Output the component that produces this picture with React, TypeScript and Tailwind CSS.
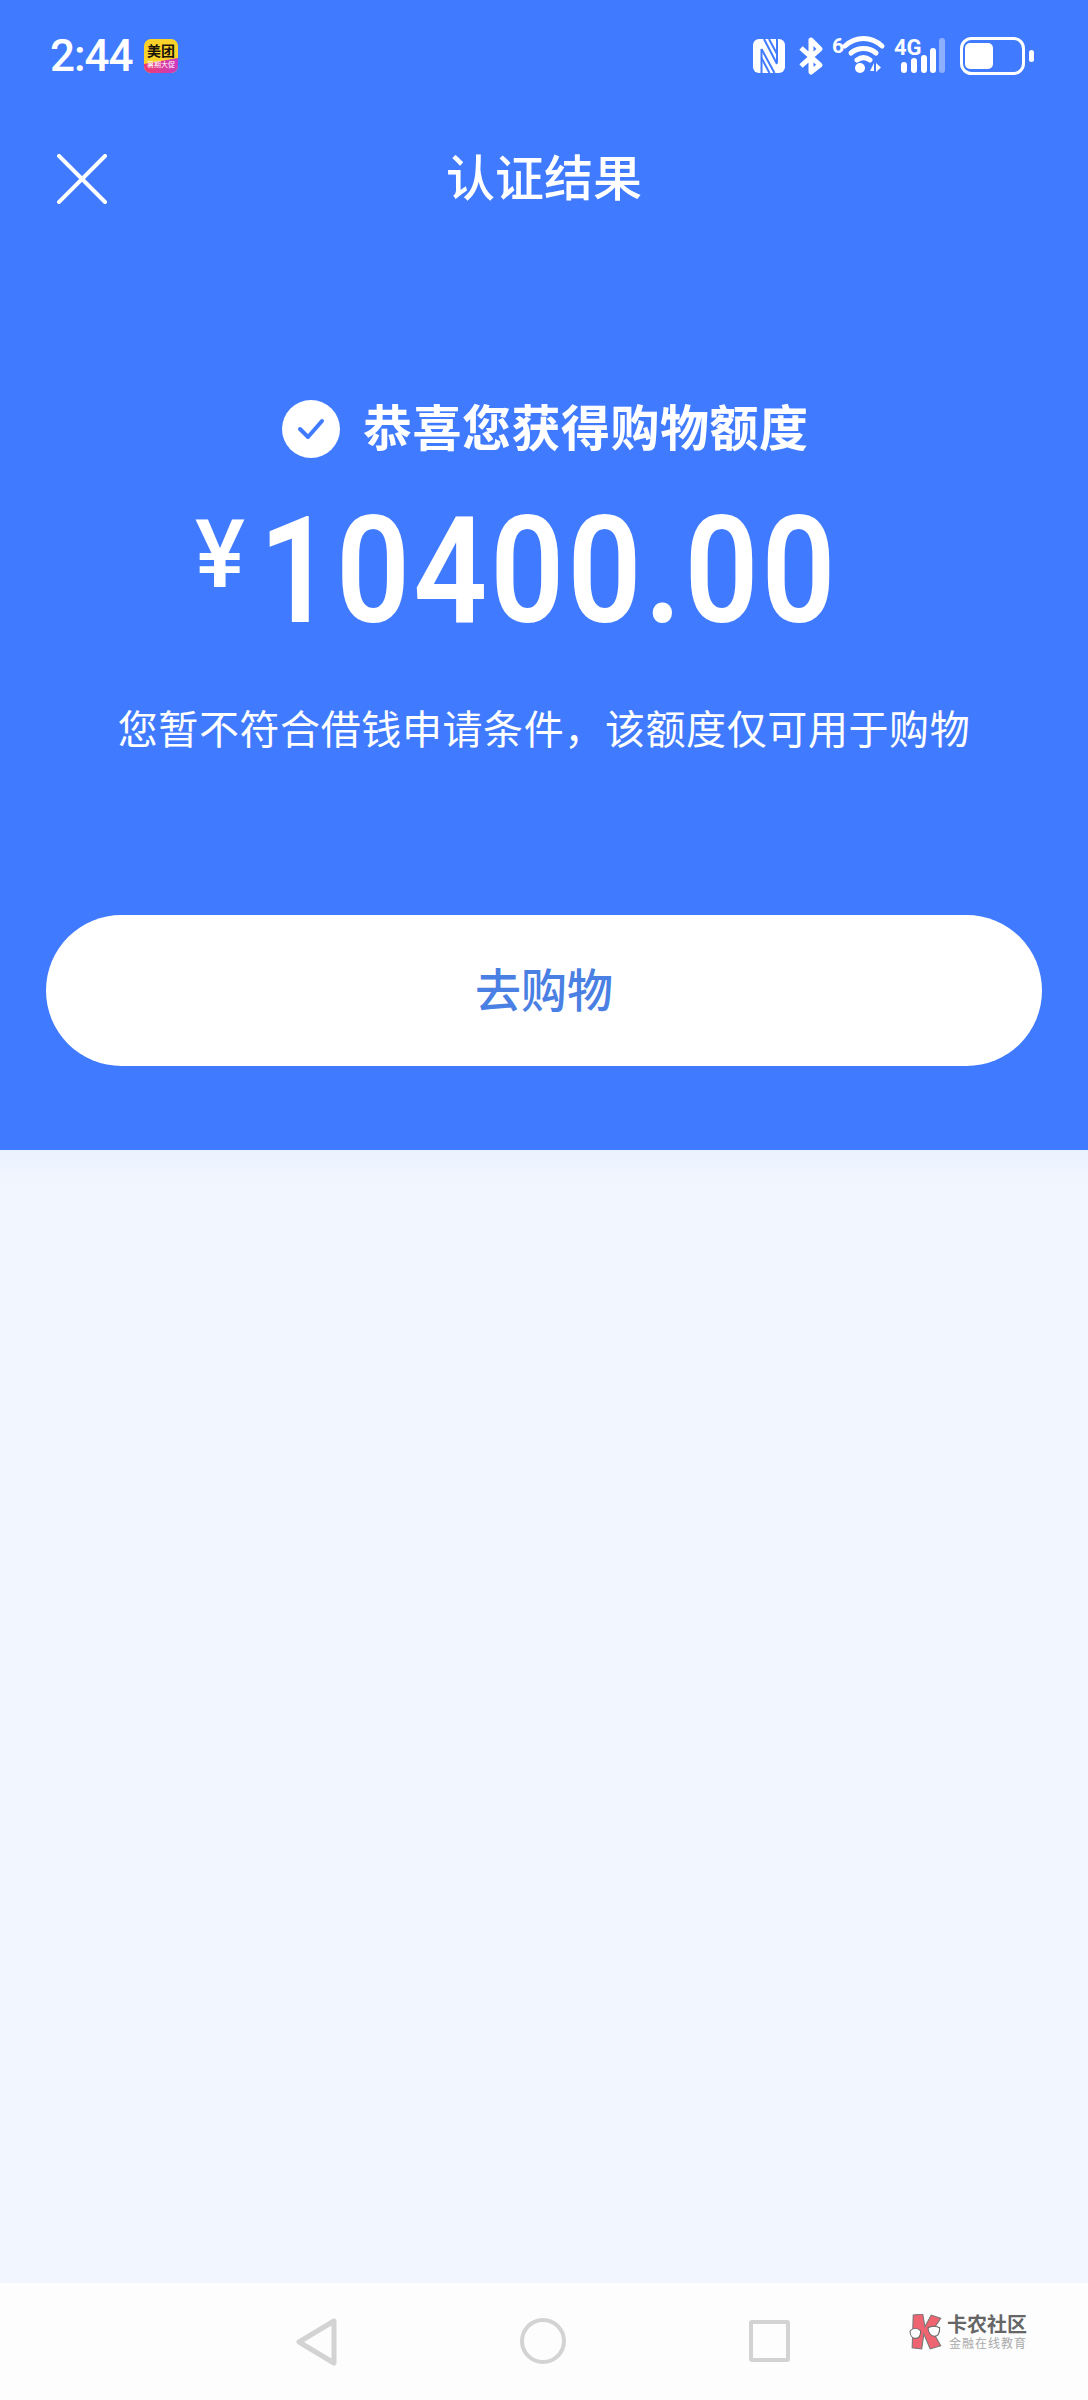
import React from 'react';

const cjk = "font-['Noto_Sans_CJK_SC','Noto_Sans',sans-serif]";

const StatusIcons = () => (
  <svg width="286" height="40" viewBox="750 36 286 40" fill="none" className="block">
    {/* nfc */}
    <rect x="753" y="39" width="32" height="34" rx="6" fill="#fff" />
    <path d="M761.5 49v24M777 39v24" stroke="#407bff" strokeWidth="2" />
    <path d="M764 39l13 25M761.5 49l13 24M769 39l8 15M761.5 58l8 15" stroke="#407bff" strokeWidth="2" />
    {/* bluetooth */}
    <path d="M801 48l19 17-9 7V40l9 9-19 17" stroke="#fff" strokeWidth="5" strokeLinejoin="round" />
    {/* wifi */}
    <text x="832" y="53" fill="#fff" fontFamily="Roboto" fontWeight="700" fontSize="21">6</text>
    <path d="M845 46c11-10 26-10 37 0M851 53c7-6 18-6 25 0M857 60c4-3 9-3 13 0" stroke="#fff" strokeWidth="5" strokeLinecap="round" />
    <circle cx="860" cy="68" r="5" fill="#fff" />
    <path d="M870 71l4-8v8zM876 63l5 4.5-5 4.5z" fill="#fff" />
    {/* signal */}
    <text x="894" y="55" fill="#fff" fontFamily="Roboto" fontWeight="700" fontSize="22">4G</text>
    <rect x="901" y="62" width="6" height="11" rx="3" fill="#fff" />
    <rect x="911" y="58" width="6" height="15" rx="3" fill="#fff" />
    <rect x="921" y="55" width="6" height="18" rx="3" fill="#fff" />
    <rect x="930" y="48" width="6" height="25" rx="3" fill="#fff" />
    <rect x="939" y="38" width="6" height="35" rx="3" fill="#fff" fillOpacity="0.4" />
    {/* battery */}
    <rect x="961.5" y="38.5" width="62" height="35" rx="10" stroke="#fff" strokeWidth="3" />
    <rect x="965" y="43" width="28" height="26" rx="5" fill="#fff" />
    <rect x="1029" y="50" width="5" height="12" rx="2.5" fill="#fff" />
  </svg>
);

const MeituanBadge = () => (
  <div className={`relative w-[34px] h-[34px] rounded-[7px] overflow-hidden bg-[#fbd22a] ${cjk}`}>
    <svg width="34" height="34" viewBox="0 0 34 34" className="absolute inset-0">
      <defs>
        <linearGradient id="mt" x1="0" x2="1" y1="0" y2="0">
          <stop offset="0" stopColor="#ec3d6f" />
          <stop offset="1" stopColor="#c93bc4" />
        </linearGradient>
      </defs>
      <path d="M0 25l34-6v15H0z" fill="url(#mt)" />
    </svg>
    <div className="relative flex justify-center text-[14px] leading-[14px] pt-[4px] font-bold text-[#1a1408] whitespace-nowrap">美团</div>
    <div className="relative flex justify-center text-[7px] leading-[8px] mt-[3px] text-white whitespace-nowrap">暑期大促</div>
  </div>
);

const Watermark = () => (
  <div className="flex items-center gap-[2px]">
    <svg width="36" height="36" viewBox="0 0 34 34">
      <path d="M4 1l9-1 2 12 6-11 9 3-8 12 8 14-10 3-6-14-2 14-9-1z" fill="#ee6470" stroke="#777" strokeWidth="1" />
      <path d="M1 16c3-3 7-3 10 0 0 5-2 7-5 7s-5-3-5-7zM18 13c3-2 8-2 11 0 0 6-2 8-5 8s-6-3-6-8z" fill="#fff" stroke="#666" strokeWidth="1" />
    </svg>
    <div className={`flex flex-col ${cjk}`}>
      <span className="block text-[20px] leading-[22px] font-bold text-[#666666] whitespace-nowrap">卡农社区</span>
      <span className="block text-[12px] leading-[15px] pl-[2px] tracking-[1px] text-[#aaaaaa] whitespace-nowrap">金融在线教育</span>
    </div>
  </div>
);

const App = () => {
  return (
    <div className={`w-[1088px] h-[2400px] flex flex-col bg-[#f2f6ff] ${cjk}`}>
      <div className="h-[1150px] bg-[#407bff] text-white flex flex-col">
        <div className="h-[76px] pt-[36px] pl-[50px] pr-[52px] flex items-center">
          <span className="font-['Roboto',sans-serif] font-medium text-[44px] leading-[44px] tracking-[-1px] w-[94px]">2:44</span>
          <MeituanBadge />
          <div className="ml-auto">
            <StatusIcons />
          </div>
        </div>

        <div className="relative h-[140px] mt-[29px] flex items-center justify-center">
          <svg width="50" height="50" viewBox="0 0 50 50" className="absolute left-[57px] top-[49px]">
            <path d="M2 2l46 46M48 2L2 48" stroke="#fff" strokeWidth="4" strokeLinecap="square" />
          </svg>
          <span className="text-[49px] leading-[60px] font-medium">认证结果</span>
        </div>

        <div className="flex items-center mt-[154px] pl-[282px]">
          <div className="w-[58px] h-[58px] rounded-full bg-white flex items-center justify-center">
            <svg width="28" height="22" viewBox="0 0 28 22">
              <path d="M3 11l8 8L25 3" fill="none" stroke="#407bff" strokeWidth="4" strokeLinecap="round" strokeLinejoin="round" />
            </svg>
          </div>
          <span className="ml-[23px] text-[49px] leading-[60px] tracking-[0.5px] font-bold whitespace-nowrap -translate-y-[4px]">恭喜您获得购物额度</span>
        </div>

        <div className="flex items-start mt-[47px] pl-[195px] font-['Roboto',sans-serif]">
          <span className="text-[94px] leading-[94px] font-medium mt-[2px] w-[64px]">¥</span>
          <span className="text-[149px] leading-[130px] font-semibold tracking-[3.5px] scale-x-[0.87] origin-left whitespace-nowrap">10400.00</span>
        </div>

        <p className="mt-[63px] text-center text-[40px] leading-[56px] tracking-[0.6px] whitespace-nowrap">
          您暂不符合借钱申请条件，该额度仅可用于购物
        </p>

        <button className="mt-[160px] mx-[46px] h-[151px] pb-[6px] rounded-full bg-white text-[#4a7fe3] text-[46px] font-medium">
          去购物
        </button>
      </div>

      <div className="flex-1 bg-gradient-to-b from-[#eaf2ff] to-[#f2f6ff] to-[3%]"></div>

      <div className="relative h-[117px] bg-[#fdfdfd] flex items-start pt-[34px]">
        <svg width="44" height="50" viewBox="0 0 44 50" fill="none" className="ml-[295px]">
          <path d="M39 4L4 25l35 21z" stroke="#d3d3d3" strokeWidth="5" strokeLinejoin="round" />
        </svg>
        <div className="ml-[181px] mt-[1px] w-[46px] h-[46px] rounded-full border-[4px] border-[#d3d3d3]"></div>
        <div className="ml-[183px] mt-[3px] w-[41px] h-[42px] rounded-[3px] border-[4px] border-[#d3d3d3]"></div>
        <div className="absolute left-[909px] top-[30px]">
          <Watermark />
        </div>
      </div>
    </div>
  );
};

export default App;
